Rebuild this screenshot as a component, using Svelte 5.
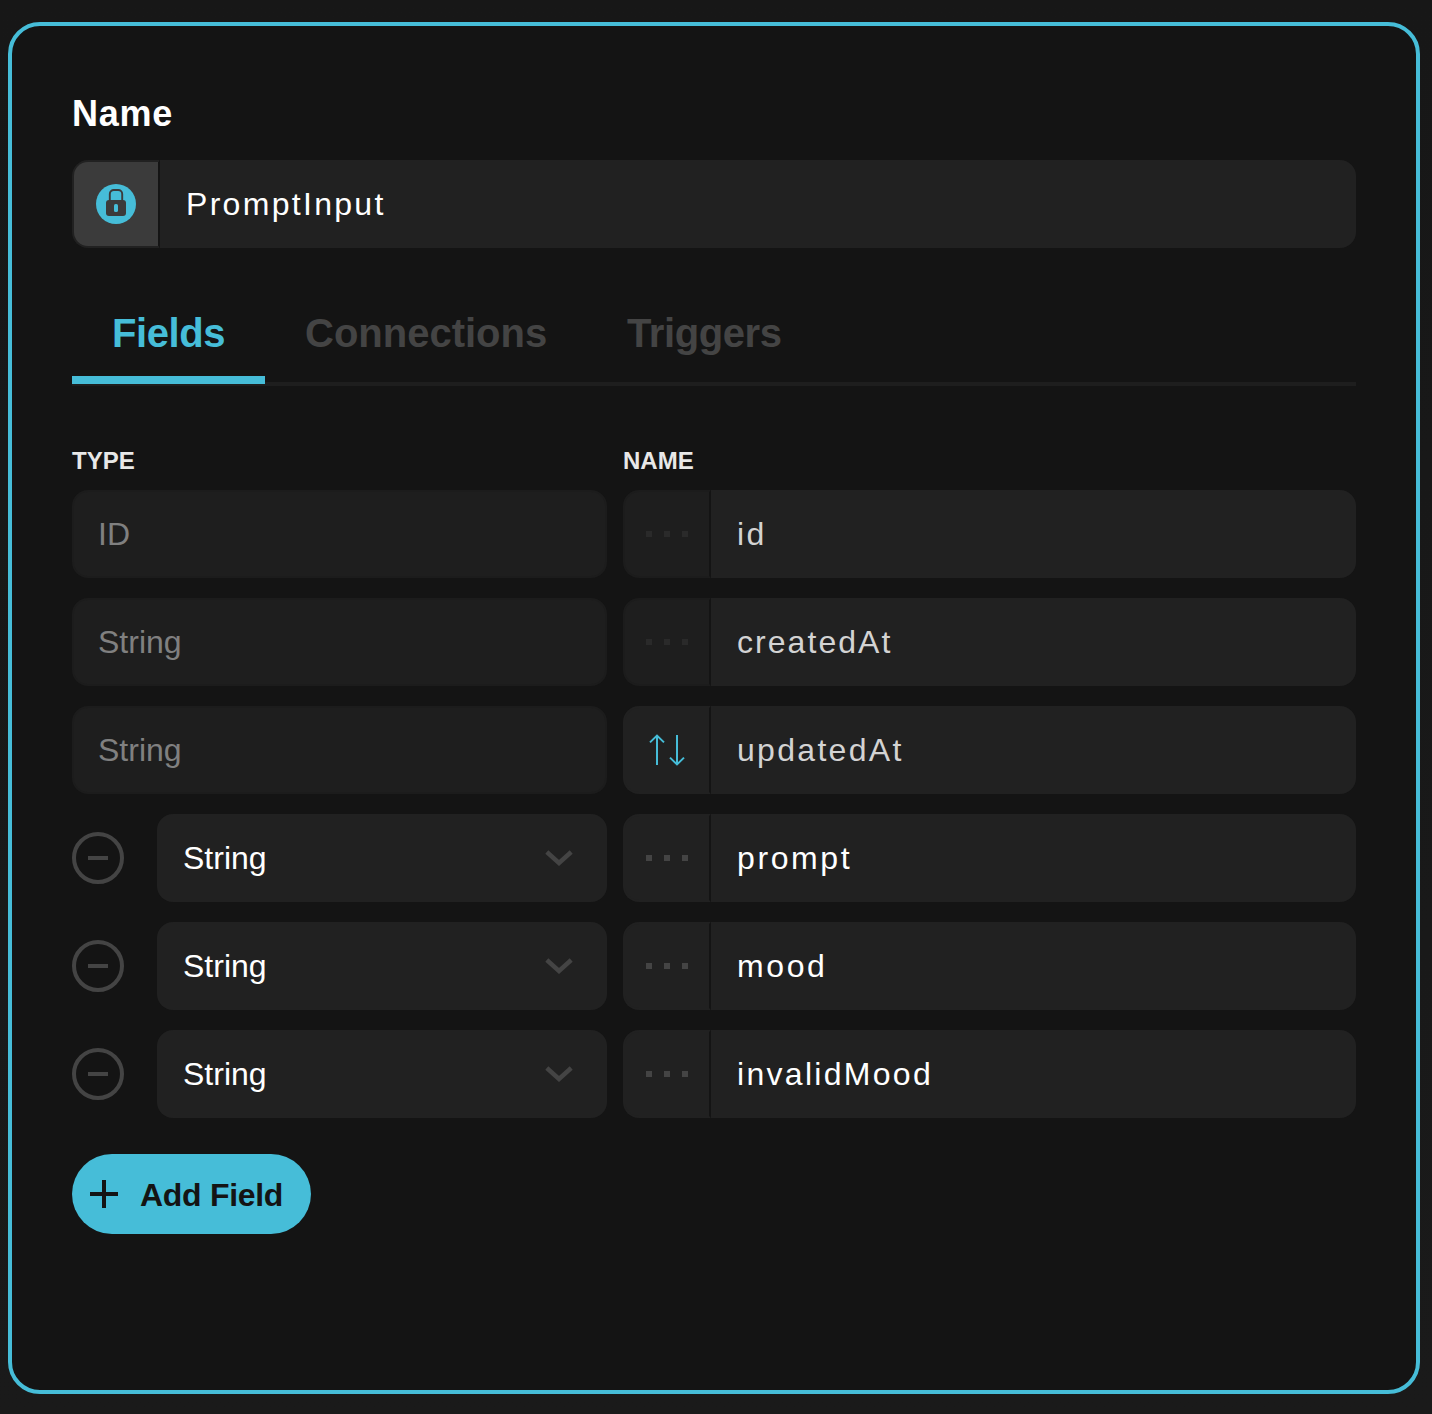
<script>
  const tabs = [
    { label: 'Fields', active: true },
    { label: 'Connections', active: false },
    { label: 'Triggers', active: false },
  ];

  const fields = [
    { type: 'ID', name: 'id', locked: true, sort: false },
    { type: 'String', name: 'createdAt', locked: true, sort: false },
    { type: 'String', name: 'updatedAt', locked: true, sort: true },
    { type: 'String', name: 'prompt', locked: false, sort: false },
    { type: 'String', name: 'mood', locked: false, sort: false },
    { type: 'String', name: 'invalidMood', locked: false, sort: false },
  ];
</script>

<main class="card">
  <h2 class="title">Name</h2>
  <div class="model-name">
    <div class="lock">
      <svg width="40" height="40" viewBox="0 0 40 40">
        <circle cx="20" cy="20" r="20" fill="#46bdd8" />
        <path d="M13.8 17v-7a4 4 0 0 1 4-4h4.4a4 4 0 0 1 4 4v7" fill="none" stroke="#3b3b3b" stroke-width="1.9" />
        <rect x="10" y="16" width="20" height="16" rx="3" fill="#3b3b3b" />
        <rect x="18" y="20" width="4" height="8" rx="1.6" fill="#46bdd8" />
      </svg>
    </div>
    <div class="value">PromptInput</div>
  </div>

  <nav class="tabs">
    {#each tabs as tab}
      <div class="tab {tab.label.toLowerCase()}" class:active={tab.active}>{tab.label}</div>
    {/each}
  </nav>

  <div class="grid heads">
    <div>TYPE</div>
    <div>NAME</div>
  </div>

  <div class="rows">
    {#each fields as field}
      <div class="grid">
        <div class="type-cell">
          {#if field.locked}
            <div class="type disabled">{field.type}</div>
          {:else}
            <div class="remove"><span></span></div>
            <div class="type">
              {field.type}
              <svg width="28" height="16" viewBox="0 0 28 16">
                <path d="M1.8 2 14 13 26.2 2" fill="none" stroke="#444" stroke-width="4.4" />
              </svg>
            </div>
          {/if}
        </div>
        <div class="name-cell">
          <div class="handle" class:disabled={field.locked && !field.sort}>
            {#if field.sort}
              <svg width="36" height="34" viewBox="0 0 36 34" fill="none" stroke="#46bdd8" stroke-width="2">
                <path d="M8 32V3M1 9.4 8 2.6l7 6.8" />
                <path d="M28 2v29M21 24.6l7 6.8 7-6.8" />
              </svg>
            {:else}
              <i></i><i></i><i></i>
            {/if}
          </div>
          <div class="value {field.name.toLowerCase()}" class:dim={field.locked}>{field.name}</div>
        </div>
      </div>
    {/each}
  </div>

  <div class="add">
    <svg width="28" height="28" viewBox="0 0 28 28">
      <path d="M14 0v28M0 14h28" stroke="#141414" stroke-width="4" />
    </svg>
    <span>Add Field</span>
  </div>
</main>

<style>
  :global(body) {
    background: linear-gradient(#171717, #1a1a1a);
  }
  :global(html) {
    background: #181818;
  }
  * {
    box-sizing: border-box;
  }
  .card {
    width: 1412px;
    height: 1372px;
    margin: 22px 0 20px 8px;
    padding: 66px 60px 0;
    border: 4px solid #46bdd8;
    border-radius: 32px;
    background: #141414;
    color: #fff;
    font-family: 'Liberation Sans', Arial, sans-serif;
    font-size: 32px;
    display: flow-root;
  }
  .title {
    margin: 0;
    height: 68px;
    font-size: 36px;
    line-height: 44px;
    letter-spacing: 0.7px;
  }
  .model-name {
    display: flex;
    height: 88px;
  }
  .lock {
    display: flex;
    align-items: center;
    justify-content: center;
    width: 88px;
    border: 2px solid #212121;
    border-right-color: #141414;
    border-radius: 16px 0 0 16px;
    background: #3b3b3b;
  }
  .value {
    flex: 1;
    padding-left: 26px;
    border-radius: 0 16px 16px 0;
    background: #212121;
    line-height: 88px;
    letter-spacing: 2.3px;
  }
  .value.createdat {
    letter-spacing: 2.05px;
  }
  .value.prompt,
  .value.mood {
    letter-spacing: 2.6px;
  }
  .dim {
    color: #d3d3d3;
  }
  .tabs {
    display: flex;
    height: 90px;
    margin-top: 48px;
    border-bottom: 4px solid #1e1e1e;
    font-size: 40px;
    font-weight: 700;
    line-height: 74px;
    color: #444;
  }
  .tab {
    height: 88px;
    padding: 0 40px;
  }
  .tab.fields {
    width: 193px;
    letter-spacing: -0.4px;
  }
  .tab.connections {
    width: 322px;
  }
  .tab.triggers {
    letter-spacing: -0.4px;
  }
  .tab.active {
    color: #46bdd8;
    border-bottom: 8px solid #46bdd8;
  }
  .grid {
    display: grid;
    grid-template-columns: 535px 733px;
    column-gap: 16px;
  }
  .heads {
    margin-top: 60px;
    height: 44px;
    font-size: 24px;
    font-weight: 700;
    line-height: 30px;
    color: #e8e8e8;
  }
  .rows {
    display: grid;
    row-gap: 20px;
  }
  .type-cell,
  .name-cell {
    display: flex;
    align-items: center;
    height: 88px;
  }
  .type {
    flex: 1;
    display: flex;
    align-items: center;
    justify-content: space-between;
    height: 88px;
    padding: 0 34px 0 26px;
    border-radius: 16px;
    background: #212121;
  }
  .type svg {
    overflow: visible;
  }
  .type.disabled {
    padding-left: 24px;
    border: 2px solid #1c1c1c;
    background: #1e1e1e;
    color: #808080;
  }
  .remove {
    display: flex;
    align-items: center;
    justify-content: center;
    width: 52px;
    height: 52px;
    margin-right: 33px;
    border: 4px solid #444;
    border-radius: 50%;
  }
  .remove span {
    width: 20px;
    height: 4px;
    background: #444;
  }
  .handle {
    display: flex;
    align-items: center;
    justify-content: center;
    gap: 12px;
    width: 88px;
    height: 88px;
    border: 2px solid #212121;
    border-right-color: #141414;
    border-radius: 16px 0 0 16px;
    background: #212121;
  }
  .handle i {
    width: 6px;
    height: 6px;
    background: #444;
  }
  .handle.disabled {
    border-color: #1c1c1c #141414 #1c1c1c #1c1c1c;
    background: #1e1e1e;
  }
  .handle.disabled i {
    background: #2a2a2a;
  }
  .add {
    display: flex;
    align-items: center;
    gap: 22px;
    width: 239px;
    height: 80px;
    margin-top: 36px;
    padding-left: 18px;
    border-radius: 40px;
    background: #46bdd8;
    color: #141414;
    font-weight: 700;
    letter-spacing: -0.3px;
    white-space: nowrap;
  }
  .add span {
    padding-top: 2px;
  }
</style>
